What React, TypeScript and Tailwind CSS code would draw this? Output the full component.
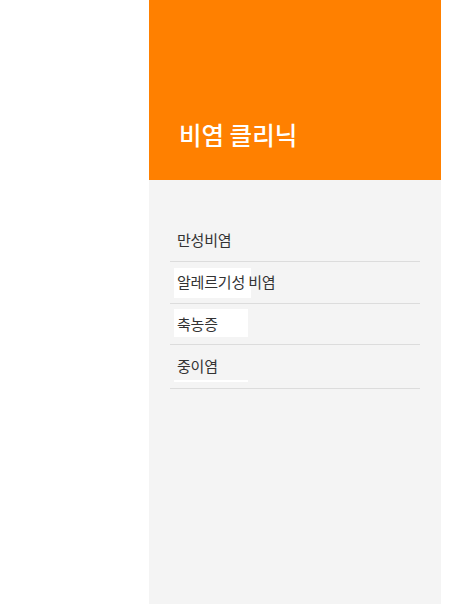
import React from "react";

export default function App() {
  const font = { fontFamily: '"Noto Sans CJK KR", "Noto Sans", sans-serif' };
  return (
    <div className="flex min-h-[604px] w-[470px] bg-white" style={font}>
      <div className="w-[149px] shrink-0" />
      <div className="flex w-[292px] shrink-0 flex-col bg-[#f4f4f4]">
        <div className="flex h-[180px] items-end bg-[#ff8000] pb-[28px] pl-[30px]">
          <h1 className="text-[24.5px] font-medium leading-[34px] text-white">비염 클리닉</h1>
        </div>
        <ul className="mx-[21px] mt-[40px] text-[15px] tracking-[-0.2px] text-[#333]">
          <li className="flex h-[42px] items-center border-b border-[#dcdcdc] pl-[7px]">만성비염</li>
          <li className="relative flex h-[42px] items-center border-b border-[#dcdcdc] pl-[7px]">
            <span className="absolute left-[4px] top-[6px] h-[30px] w-[77px] bg-white" />
            <span className="relative">알레르기성 비염</span>
          </li>
          <li className="relative flex h-[41px] items-center border-b border-[#dcdcdc] pl-[7px]">
            <span className="absolute left-[4px] top-[5px] h-[28px] w-[74px] bg-white" />
            <span className="relative">축농증</span>
          </li>
          <li className="relative flex h-[44px] items-center border-b border-[#dcdcdc] pl-[7px]">
            <span className="absolute left-[4px] top-[35px] h-[2px] w-[74px] bg-white" />
            <span className="relative">중이염</span>
          </li>
        </ul>
      </div>
      <div className="w-[29px] shrink-0" />
    </div>
  );
}
